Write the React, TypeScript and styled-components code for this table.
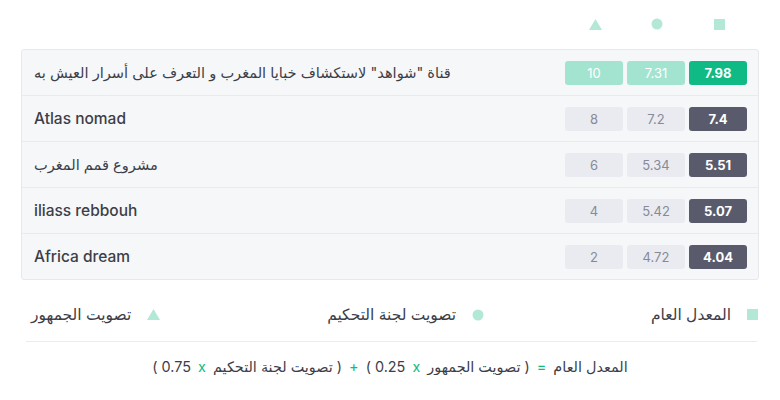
import React from "react";
import styled, { createGlobalStyle } from "styled-components";

const GlobalStyle = createGlobalStyle`
  body {
    margin: 0;
    background: #ffffff;
    font-family: "Inter", "DejaVu Sans", sans-serif;
  }
`;

const Page = styled.div`
  width: 738px;
  padding: 12px 21px 0;
`;

const IconHeader = styled.div`
  display: flex;
  justify-content: flex-end;
  gap: 4px;
  padding-right: 11px;
  height: 24px;
  margin-bottom: 13px;
`;

const IconSlot = styled.div`
  width: 58px;
  display: flex;
  align-items: center;
  justify-content: center;
`;

const Table = styled.div`
  background: #f6f7f9;
  border: 1px solid #e7e8ec;
  border-radius: 3px;
`;

const Row = styled.div`
  display: flex;
  align-items: center;
  justify-content: space-between;
  height: 45px;
  padding: 0 11px 0 12px;
  border-top: 1px solid #e9eaee;
  &:first-child {
    border-top: none;
  }
`;

const Name = styled.div<{ $ar?: boolean }>`
  font-size: ${(p) => (p.$ar ? "14.6px" : "15.5px")};
  font-weight: ${(p) => (p.$ar ? 400 : 500)};
  color: #3d3e48;
`;

const Scores = styled.div`
  display: flex;
  gap: 4px;
`;

const Cell = styled.div<{ $tone: "soft" | "strong" | "grey" | "dark" }>`
  width: 58px;
  height: 24px;
  border-radius: 3px;
  display: flex;
  align-items: center;
  justify-content: center;
  font-size: 13px;
  background: ${(p) =>
    p.$tone === "soft"
      ? "#a3e4d0"
      : p.$tone === "strong"
      ? "#0fba84"
      : p.$tone === "grey"
      ? "#eaebf0"
      : "#595b6c"};
  color: ${(p) => (p.$tone === "grey" ? "#868a98" : "#ffffff")};
  font-weight: ${(p) => (p.$tone === "strong" || p.$tone === "dark" ? 700 : 400)};
`;

const Legend = styled.div`
  direction: rtl;
  display: flex;
  justify-content: space-between;
  align-items: center;
  padding: 25px 1px 0 10px;
`;

const LegendItem = styled.div`
  display: flex;
  align-items: center;
  gap: 16px;
  font-size: 15.5px;
  color: #3d3e48;
`;

const Divider = styled.div`
  height: 1px;
  background: #ececef;
  margin: 17px 2px 0 5px;
`;

const Formula = styled.div`
  direction: rtl;
  text-align: center;
  font-size: 14.4px;
  color: #3d3e48;
  padding-top: 16px;
`;

const Op = styled.span`
  display: inline-block;
  margin: 0 3px;
  color: #0fba84;
`;

const mint = "#b4e8d6";

const Square = () => (
  <svg width="11" height="11" viewBox="0 0 11 11">
    <rect width="11" height="11" fill={mint} />
  </svg>
);

const Circle = () => (
  <svg width="12" height="12" viewBox="0 0 12 12">
    <circle cx="6" cy="6" r="5.5" fill={mint} />
  </svg>
);

const Triangle = () => (
  <svg width="13" height="11" viewBox="0 0 13 11">
    <polygon points="6.5,0 13,11 0,11" fill={mint} />
  </svg>
);

const rows = [
  { name: 'قناة "شواهد" لاستكشاف خبايا المغرب و التعرف على أسرار العيش به', ar: true, a: "10", j: "7.31", g: "7.98", top: true },
  { name: "Atlas nomad", a: "8", j: "7.2", g: "7.4" },
  { name: "مشروع قمم المغرب", ar: true, a: "6", j: "5.34", g: "5.51" },
  { name: "iliass rebbouh", a: "4", j: "5.42", g: "5.07" },
  { name: "Africa dream", a: "2", j: "4.72", g: "4.04" },
];

export default function App() {
  return (
    <Page>
      <GlobalStyle />
      <IconHeader>
        <IconSlot>
          <Triangle />
        </IconSlot>
        <IconSlot>
          <Circle />
        </IconSlot>
        <IconSlot>
          <Square />
        </IconSlot>
      </IconHeader>
      <Table>
        {rows.map((r) => (
          <Row key={r.name}>
            <Name $ar={r.ar}>{r.name}</Name>
            <Scores>
              <Cell $tone={r.top ? "soft" : "grey"}>{r.a}</Cell>
              <Cell $tone={r.top ? "soft" : "grey"}>{r.j}</Cell>
              <Cell $tone={r.top ? "strong" : "dark"}>{r.g}</Cell>
            </Scores>
          </Row>
        ))}
      </Table>
      <Legend>
        <LegendItem>
          <Square />
          <span>المعدل العام</span>
        </LegendItem>
        <LegendItem>
          <Circle />
          <span>تصويت لجنة التحكيم</span>
        </LegendItem>
        <LegendItem>
          <Triangle />
          <span>تصويت الجمهور</span>
        </LegendItem>
      </Legend>
      <Divider />
      <Formula>
        المعدل العام <Op>=</Op> ( تصويت الجمهور <Op>x</Op> 0.25 ) <Op>+</Op> ( تصويت لجنة التحكيم <Op>x</Op> 0.75 )
      </Formula>
    </Page>
  );
}
